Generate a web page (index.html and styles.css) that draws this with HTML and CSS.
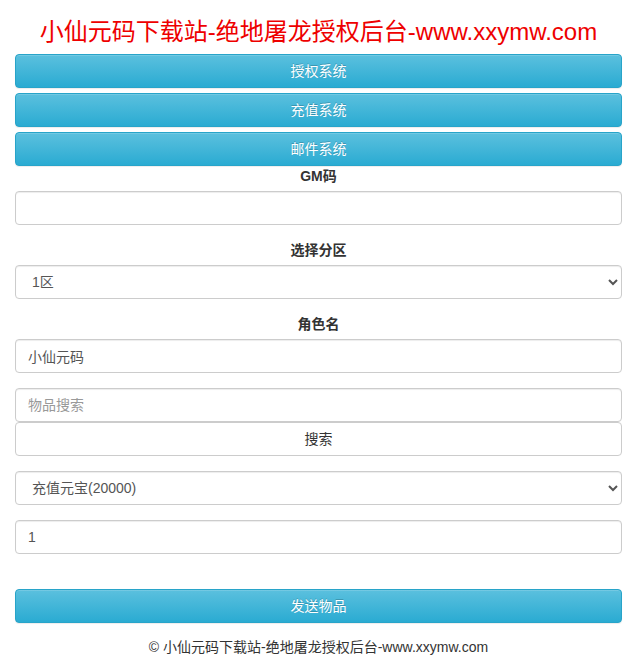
FILE: index.html
```html
<!DOCTYPE html>
<html lang="zh-CN">
<head>
<meta charset="utf-8">
<title>绝地屠龙授权后台</title>
<link rel="stylesheet" href="styles.css">
</head>
<body>
<div class="container">
  <h3 class="title">小仙元码下载站-绝地屠龙授权后台-www.xxymw.com</h3>
  <div class="nav">
    <button class="btn btn-info">授权系统</button>
    <button class="btn btn-info">充值系统</button>
    <button class="btn btn-info">邮件系统</button>
  </div>
  <div class="form-group">
    <label class="label">GM码</label>
    <input class="form-control" type="text">
  </div>
  <div class="form-group">
    <label class="label">选择分区</label>
    <select class="form-control select">
      <option>1区</option>
    </select>
  </div>
  <div class="form-group">
    <label class="label">角色名</label>
    <input class="form-control" type="text" value="小仙元码">
  </div>
  <div class="form-group">
    <input class="form-control" type="text" placeholder="物品搜索">
    <button class="btn btn-default">搜索</button>
  </div>
  <div class="form-group">
    <select class="form-control select">
      <option>充值元宝(20000)</option>
    </select>
  </div>
  <div class="form-group">
    <input class="form-control" type="text" value="1">
  </div>
  <div class="send">
    <button class="btn btn-info">发送物品</button>
  </div>
  <p class="footer">© 小仙元码下载站-绝地屠龙授权后台-www.xxymw.com</p>
</div>
</body>
</html>
```

FILE: styles.css
```css
* { box-sizing: border-box; }
html, body {
  margin: 0;
  padding: 0;
  background: #fff;
}
body {
  font-family: "Liberation Sans", Arial, "Noto Sans CJK SC", sans-serif;
  font-size: 14px;
  line-height: 20px;
  color: #333;
}
.container {
  padding: 0 15px;
}
.title {
  margin: 18px 0 8px;
  font-size: 24px;
  line-height: 28px;
  font-weight: normal;
  color: #ee0000;
  text-align: center;
}
.nav {
  display: flex;
  flex-direction: column;
  gap: 5px;
}
.btn {
  display: block;
  width: 100%;
  height: 34px;
  padding: 6px 12px;
  font-family: inherit;
  font-size: 14px;
  line-height: 20px;
  text-align: center;
  border: 1px solid transparent;
  border-radius: 4px;
  cursor: pointer;
}
.btn-info {
  color: #fff;
  background-color: #5bc0de;
  background-image: linear-gradient(to bottom, #5bc0de 0, #2aabd2 100%);
  border-color: #28a4c9;
  text-shadow: 0 -1px 0 rgba(0,0,0,.2);
  box-shadow: inset 0 1px 0 rgba(255,255,255,.15), 0 1px 1px rgba(0,0,0,.075);
}
.btn-default {
  color: #333;
  background: #fff;
  border-color: #ccc;
}
.form-group {
  margin-bottom: 15px;
}
.label {
  display: block;
  margin-bottom: 5px;
  font-weight: bold;
  text-align: center;
}
.form-control {
  display: block;
  width: 100%;
  height: 34px;
  padding: 6px 12px;
  font-family: inherit;
  font-size: 14px;
  line-height: 20px;
  color: #555;
  background-color: #fff;
  border: 1px solid #ccc;
  border-radius: 4px;
  box-shadow: inset 0 1px 1px rgba(0,0,0,.075);
}
.form-control::placeholder {
  color: #999;
}
.send {
  margin-top: 35px;
}
.footer {
  margin: 14px 0 0;
  text-align: center;
  color: #333;
}
```
